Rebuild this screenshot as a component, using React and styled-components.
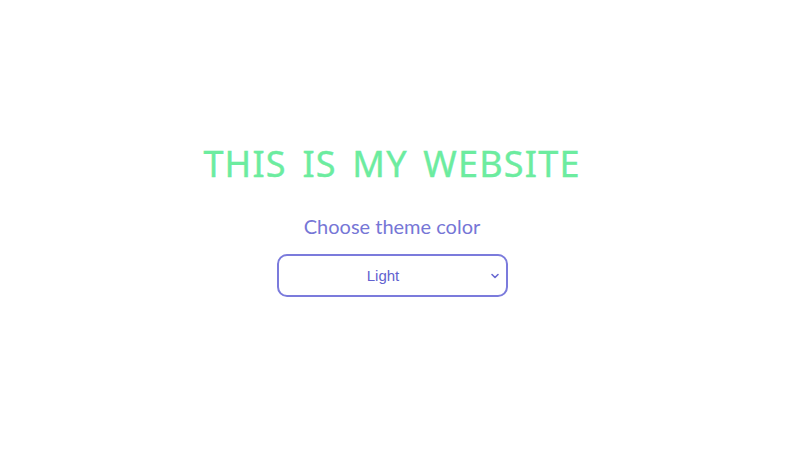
import React from "react";
import styled, { createGlobalStyle } from "styled-components";

const Global = createGlobalStyle`
  html, body { margin: 0; padding: 0; background: #ffffff; }
  body { width: 800px; height: 450px; overflow: hidden; }
`;

const Page = styled.main`
  width: 784px;
  height: 450px;
  display: flex;
  flex-direction: column;
  align-items: center;
  padding-top: 142px;
  box-sizing: border-box;
  font-family: "Noto Sans", "Open Sans", sans-serif;
`;

const Title = styled.h1`
  margin: 0;
  font-size: 36px;
  font-weight: 400;
  letter-spacing: 1.2px;
  word-spacing: 5px;
  color: #6cec9f;
  line-height: 44px;
  -webkit-text-stroke: 0.4px #6cec9f;
`;

const Label = styled.label`
  margin-top: 26px;
  font-family: Lato, "Noto Sans", sans-serif;
  font-size: 20px;
  color: #7676d6;
  line-height: 28px;
`;

const SelectWrap = styled.div`
  position: relative;
  margin-top: 14px;
  width: 231px;
  height: 43px;
`;

const Select = styled.select`
  appearance: none;
  width: 100%;
  height: 100%;
  border: 2px solid #7b7bdc;
  border-radius: 10px;
  background: #fff;
  color: #6262d0;
  font-family: "Liberation Sans", Arial, sans-serif;
  font-size: 15px;
  text-align: center;
  text-align-last: center;
  padding: 0 18px 0 0;
  outline: none;
`;

const Chevron = styled.svg`
  position: absolute;
  right: 8px;
  top: 50%;
  transform: translateY(-50%);
  pointer-events: none;
`;

export default function App() {
  return (
    <>
      <Global />
      <Page>
        <Title>THIS IS MY WEBSITE</Title>
        <Label htmlFor="theme">Choose theme color</Label>
        <SelectWrap>
          <Select id="theme" defaultValue="light">
            <option value="light">Light</option>
            <option value="dark">Dark</option>
          </Select>
          <Chevron width="10" height="10" viewBox="0 0 10 10">
            <path d="M2 3.5 L5 6.5 L8 3.5" fill="none" stroke="#6a6ad2" strokeWidth="1.6" strokeLinecap="round" strokeLinejoin="round" />
          </Chevron>
        </SelectWrap>
      </Page>
    </>
  );
}
